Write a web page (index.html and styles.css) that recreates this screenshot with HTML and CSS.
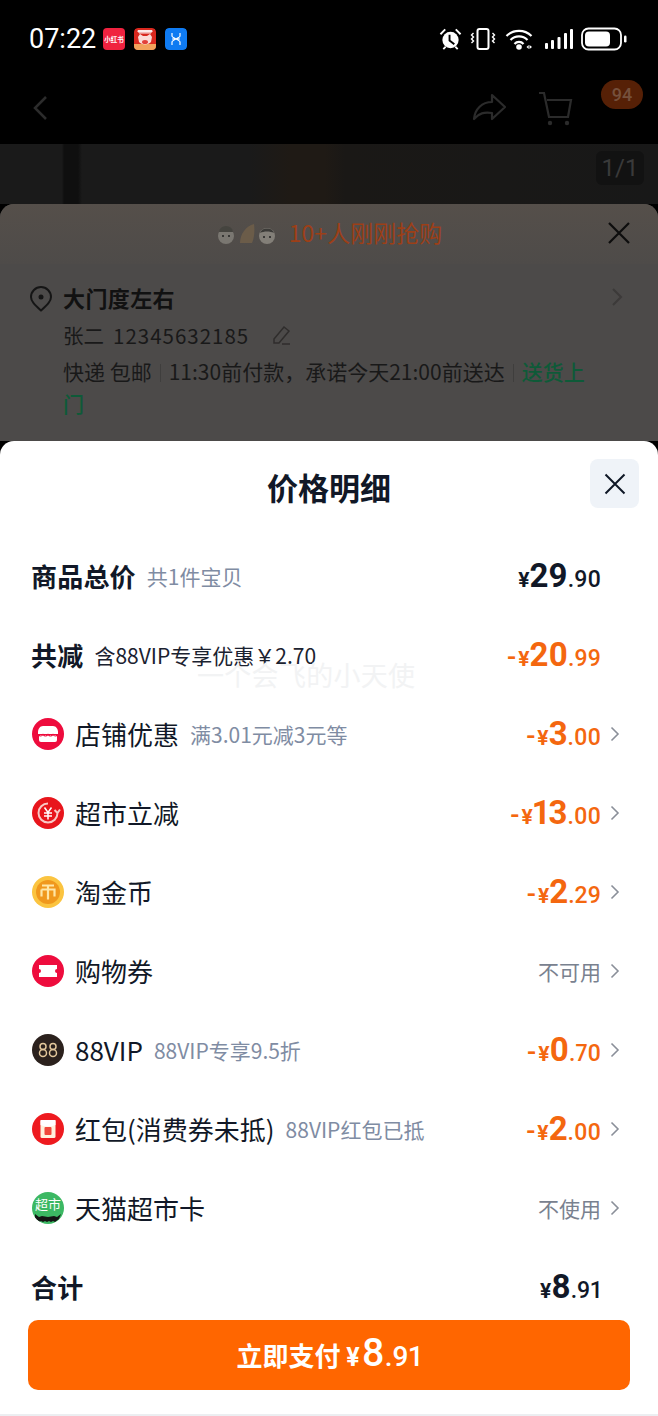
FILE: index.html
```html
<!DOCTYPE html>
<html lang="zh">
<head>
<meta charset="utf-8">
<title>价格明细</title>
<link rel="stylesheet" href="styles.css">
</head>
<body>
<div class="status">
  <span class="time">07:22</span>
  <span class="app app-red">小红书</span>
  <span class="app app-pig"><svg viewBox="0 0 22 22" width="22" height="22"><rect width="22" height="22" rx="4" fill="#d9281f"/><rect y="16" width="22" height="6" fill="#f2a25c"/><path d="M4 9l2-3 3 2h4l3-2 2 3-1 5a7 5 0 0 1-12 0z" fill="#fbdcd8"/><ellipse cx="11" cy="14" rx="3" ry="2" fill="#e2413a"/><path d="M4 2.500h14v1.500H4zM5 5h12" stroke="#fff" stroke-width="1" fill="#fff" opacity=".9"/></svg></span>
  <span class="app app-blue"><svg viewBox="0 0 22 22" width="22" height="22"><rect width="22" height="22" rx="4" fill="#0f7bf2"/><path d="M7 5v3c0 2 8 4 8 6v3M15 5v3c0 2-8 4-8 6v3M7 11h8" stroke="#fff" stroke-width="1.200" fill="none"/></svg></span>
  <span class="status-right">
    <svg class="ic-alarm" viewBox="0 0 24 24" width="23" height="23"><circle cx="12" cy="12.500" r="8.500" fill="#fff"/><path d="M11 7v6l5 4" stroke="#000" stroke-width="2" fill="none"/><path d="M1.500 6.500l5-5M22.500 6.500l-5-5M4.500 22l2.500-2.500M19.500 22L17 19.500" stroke="#fff" stroke-width="2"/></svg>
    <svg class="ic-vib" viewBox="0 0 26 24" width="26" height="24"><rect x="7.500" y="2" width="11" height="20" rx="2" fill="none" stroke="#fff" stroke-width="2"/><path d="M3.500 6L1.500 8l2 2-2 2 2 2-2 2M22.500 6l2 2-2 2 2 2-2 2 2 2" stroke="#fff" stroke-width="1.400" fill="none"/></svg>
    <svg class="ic-wifi" viewBox="0 0 28 22" width="28" height="22"><path d="M1.500 8a18 18 0 0 1 25 0M5.500 12a12 12 0 0 1 17 0M9.500 16a6 6 0 0 1 9 0" stroke="#fff" stroke-width="2.200" fill="none"/><circle cx="14" cy="19" r="2.800" fill="#fff"/><path d="M21.500 19l2.200-2v4zM24.500 17l2.500 2-2.500 2z" fill="#fff"/></svg>
    <svg class="ic-signal" viewBox="0 0 28 22" width="28" height="22"><rect x="0" y="15" width="3" height="6" rx="1" fill="#fff"/><rect x="6" y="12" width="3" height="9" rx="1" fill="#fff"/><rect x="12.500" y="9" width="3" height="12" rx="1" fill="#fff"/><rect x="19" y="5" width="3" height="16" rx="1" fill="#fff"/><rect x="25" y="1" width="3" height="20" rx="1" fill="#fff"/></svg>
    <svg class="ic-batt" viewBox="0 0 46 24" width="46" height="24"><rect x="1" y="1.500" width="39" height="21" rx="6.500" fill="none" stroke="#fff" stroke-width="1.800"/><rect x="4" y="4.500" width="25" height="15" rx="4" fill="#fff"/><rect x="43" y="8.500" width="2.500" height="7" rx="1.200" fill="#fff"/></svg>
  </span>
</div>

<div class="nav">
  <svg class="nav-back" viewBox="0 0 20 28" width="20" height="28"><path d="M16 3L5 14l11 11" stroke="#2c2c2c" stroke-width="2.500" fill="none"/></svg>
  <span class="nav-right">
    <svg viewBox="0 0 36 30" width="36" height="30"><path d="M21 2l13 12-13 12v-6c-8-1-13 0-18 6 1-10 8-17 18-17z" fill="none" stroke="#2b2b2b" stroke-width="2.200" stroke-linejoin="round"/></svg>
    <svg viewBox="0 0 36 36" width="36" height="36"><path d="M2 3h5l5 24h19l3-17H10" fill="none" stroke="#2b2b2b" stroke-width="2.200"/><circle cx="13" cy="33" r="2.200" fill="#2b2b2b"/><circle cx="30" cy="33" r="2.200" fill="#2b2b2b"/></svg>
    <span class="badge">94</span>
  </span>
</div>

<div class="photo"><span class="counter">1/1</span></div>

<section class="under">
  <div class="under-head">
    <svg class="avatars" viewBox="0 0 62 24" width="62" height="24"><circle cx="10" cy="14" r="8" fill="#7a7771"/><path d="M3 10a7 6 0 0 1 14 0z" fill="#45443f"/><circle cx="7" cy="14" r="1" fill="#222"/><circle cx="13" cy="14" r="1" fill="#222"/><path d="M24 21c0-9 6-17 14-19 1 7 0 15-2 19z" fill="#6b5c49"/><circle cx="51" cy="14" r="8" fill="#837f78"/><path d="M44 11a7.500 7 0 0 1 14 0c-4-2-10-2-14 0z" fill="#3c3b38"/><circle cx="48" cy="15" r="1" fill="#222"/><circle cx="54" cy="15" r="1" fill="#222"/></svg>
    <span class="rush">10+人刚刚抢购</span>
    <svg class="under-x" viewBox="0 0 24 24" width="24" height="24"><path d="M2 2l20 20M22 2L2 22" stroke="#0d0d0d" stroke-width="2.200"/></svg>
  </div>
  <div class="addr">
    <svg class="pin" viewBox="0 0 24 26" width="24" height="26"><path d="M12 24.500C6 19 2 15.500 2 11a10 10 0 0 1 20 0c0 4.500-4 8-10 13.500z" fill="none" stroke="#151515" stroke-width="2"/><circle cx="12" cy="11" r="2.500" fill="#151515"/></svg>
    <div class="addr-body">
      <div class="addr-title"><b>大门度左右</b><svg viewBox="0 0 12 20" width="12" height="20"><path d="M2 2l8 8-8 8" stroke="#3c3a39" stroke-width="2" fill="none"/></svg></div>
      <div class="addr-person"><span>张二</span><span class="phone">12345632185</span><svg viewBox="0 0 22 22" width="22" height="22"><path d="M4 15L14 3l5 4L9 19H4zM12 20h8" fill="none" stroke="#2f2d2c" stroke-width="1.500"/></svg></div>
      <p class="addr-ship">快递 包邮<i class="sep"></i>11:30前付款，承诺今天21:00前送达<i class="sep"></i><span class="green">送货上</span><span class="green">门</span></p>
    </div>
  </div>
</section>

<section class="sheet">
  <div class="watermark">一个会飞的小天使</div>
  <header class="sheet-head">
    <h1>价格明细</h1>
    <button class="close" type="button" aria-label="关闭"><svg viewBox="0 0 22 22" width="22" height="22"><path d="M1.500 1.500l19 19M20.500 1.500l-19 19" stroke="#0f1726" stroke-width="2"/></svg></button>
  </header>

  <div class="row">
    <span class="strong">商品总价</span><span class="note">共1件宝贝</span>
    <span class="price dark"><small>¥</small><b>29</b><em>.90</em></span>
  </div>
  <div class="row">
    <span class="strong">共减</span><span class="note note-dark">含88VIP专享优惠￥2.70</span>
    <span class="price"><small class="minus">-</small><small>¥</small><b>20</b><em>.99</em></span>
  </div>
  <div class="row">
    <svg class="ri" viewBox="0 0 32 32"><circle cx="16" cy="16" r="16" fill="#ee0c3d"/><path d="M11 8h10c3 0 5 3 5 6v2H6v-2c0-3 2-6 5-6z" fill="#fff"/><path d="M7 17h18v5a2 2 0 0 1-2 2H9a2 2 0 0 1-2-2z" fill="#fff"/><path d="M6 16.500q3 3 5 0 2.500 3 5 0 2.500 3 5 0 2 3 5 0" fill="none" stroke="#ee0c3d" stroke-width="1.200"/></svg>
    <span class="label">店铺优惠</span><span class="note">满3.01元减3元等</span>
    <span class="price"><small class="minus">-</small><small>¥</small><b>3</b><em>.00</em></span>
    <svg class="chev" viewBox="0 0 10 16"><path d="M1.500 1.500L8 8l-6.500 6.500" fill="none" stroke="#8a8f99" stroke-width="1.600"/></svg>
  </div>
  <div class="row">
    <svg class="ri" viewBox="0 0 32 32"><circle cx="16" cy="16" r="16" fill="#e8151c"/><path d="M16 6.500a9.500 9.500 0 1 0 9.500 9.500M25.500 16l-3-3M25.500 16l2.500-3.500" fill="none" stroke="#f9c9c6" stroke-width="2"/><path d="M12.500 10.500l3.500 5 3.500-5M12 16h8M12 19h8M16 15.500v7" fill="none" stroke="#fff" stroke-width="1.500"/></svg>
    <span class="label">超市立减</span>
    <span class="price"><small class="minus">-</small><small>¥</small><b>13</b><em>.00</em></span>
    <svg class="chev" viewBox="0 0 10 16"><path d="M1.500 1.500L8 8l-6.500 6.500" fill="none" stroke="#8a8f99" stroke-width="1.600"/></svg>
  </div>
  <div class="row">
    <svg class="ri" viewBox="0 0 32 32"><circle cx="16" cy="16" r="16" fill="#fbc440"/><circle cx="16" cy="16" r="12" fill="#f0981d"/><path d="M10 9.500h12M16 9.500v14M9.500 13.500h13v7M9.500 13.500v7" fill="none" stroke="#ffe6a6" stroke-width="2.200"/></svg>
    <span class="label">淘金币</span>
    <span class="price"><small class="minus">-</small><small>¥</small><b>2</b><em>.29</em></span>
    <svg class="chev" viewBox="0 0 10 16"><path d="M1.500 1.500L8 8l-6.500 6.500" fill="none" stroke="#8a8f99" stroke-width="1.600"/></svg>
  </div>
  <div class="row">
    <svg class="ri" viewBox="0 0 32 32"><circle cx="16" cy="16" r="16" fill="#ee0c3d"/><path d="M7 10h18v4a2 2 0 0 0 0 4v4H7v-4a2 2 0 0 0 0-4z" fill="#fff"/></svg>
    <span class="label">购物券</span>
    <span class="state">不可用</span>
    <svg class="chev" viewBox="0 0 10 16"><path d="M1.500 1.500L8 8l-6.500 6.500" fill="none" stroke="#8a8f99" stroke-width="1.600"/></svg>
  </div>
  <div class="row">
    <svg class="ri" viewBox="0 0 32 32"><circle cx="16" cy="16" r="16" fill="#2b211d"/><g fill="none" stroke="#e3c79b" stroke-width="1.500"><circle cx="11" cy="12.500" r="3"/><circle cx="11" cy="19" r="3.500"/><circle cx="21" cy="12.500" r="3"/><circle cx="21" cy="19" r="3.500"/></g></svg>
    <span class="label">88VIP</span><span class="note">88VIP专享9.5折</span>
    <span class="price"><small class="minus">-</small><small>¥</small><b>0</b><em>.70</em></span>
    <svg class="chev" viewBox="0 0 10 16"><path d="M1.500 1.500L8 8l-6.500 6.500" fill="none" stroke="#8a8f99" stroke-width="1.600"/></svg>
  </div>
  <div class="row">
    <svg class="ri" viewBox="0 0 32 32"><circle cx="16" cy="16" r="16" fill="#ee1a1f"/><rect x="8.500" y="7" width="15" height="18" rx="1.500" fill="#fff1dc"/><path d="M8.500 7h15v5q-7.500 3-15 0z" fill="#fff"/><rect x="12.500" y="14" width="7" height="8" rx="1" fill="#f0483a"/></svg>
    <span class="label">红包(消费券未抵)</span><span class="note">88VIP红包已抵</span>
    <span class="price"><small class="minus">-</small><small>¥</small><b>2</b><em>.00</em></span>
    <svg class="chev" viewBox="0 0 10 16"><path d="M1.500 1.500L8 8l-6.500 6.500" fill="none" stroke="#8a8f99" stroke-width="1.600"/></svg>
  </div>
  <div class="row">
    <span class="ri ri-cat"><span class="ri-cat-text">超市</span><svg viewBox="0 0 32 10" width="32" height="10"><path d="M3 1l4 3 3-1 6 1 6-1 3 1 4-3-2 5-4 3-2-1-2 1-2-1-2 1-2-1-2 1-2-1-2 1-4-3z" fill="#141414"/></svg></span>
    <span class="label">天猫超市卡</span>
    <span class="state">不使用</span>
    <svg class="chev" viewBox="0 0 10 16"><path d="M1.500 1.500L8 8l-6.500 6.500" fill="none" stroke="#8a8f99" stroke-width="1.600"/></svg>
  </div>
  <div class="row">
    <span class="strong">合计</span>
    <span class="price dark"><small>¥</small><b>8</b><em>.91</em></span>
  </div>
  <button class="pay" type="button">立即支付 <small>¥</small><b>8</b><em>.91</em></button>
</section>
</body>
</html>
```
FILE: styles.css
```css
* { box-sizing: border-box; }
html, body { margin: 0; padding: 0; }
body {
  width: 658px;
  height: 1416px;
  overflow: hidden;
  background: #000;
  font-family: "Noto Sans CJK SC", "Noto Sans", sans-serif;
  color: #111827;
}
svg { display: block; flex: none; }
.status {
  height: 72px;
  padding: 6px 31px 0 29px;
  display: flex;
  align-items: center;
}
.time {
  font: 400 27px/32px Roboto, sans-serif;
  color: #fff;
  margin-right: 8px;
  width: 66px;
}
.app { width: 22px; height: 22px; margin-right: 9px; border-radius: 4px; overflow: hidden; }
.app-red {
  background: #f0223f;
  color: #fff;
  font-size: 6.500px;
  font-weight: 700;
  line-height: 22px;
  text-align: center;
  white-space: nowrap;
}
.status-right { margin-left: auto; display: flex; align-items: center; }
.ic-vib { margin-left: 8px; }
.ic-wifi { margin-left: 9px; }
.ic-signal { margin-left: 12px; }
.ic-batt { margin-left: 8px; }

.nav {
  height: 72px;
  display: flex;
  align-items: center;
  padding: 0 15px 0 30px;
}
.nav-right { margin-left: auto; display: flex; align-items: center; gap: 30px; position: relative; padding-right: 70px; }
.badge {
  position: absolute;
  right: 0;
  top: -10px;
  width: 42px;
  height: 29px;
  border-radius: 15px;
  background: #562006;
  color: #75503c;
  font: 500 18px/29px Roboto, sans-serif;
  text-align: center;
}

.photo {
  height: 60px;
  background: linear-gradient(90deg, #1a1a1a 0 62px, #0f0f0f 64px 78px, #1a1a1a 82px 250px, #1f1a15 290px 325px, #1a1816 345px, #181818 658px);
  display: flex;
  justify-content: flex-end;
  padding: 7px 14px 0 0;
}
.counter {
  width: 48px;
  height: 34px;
  border-radius: 6px;
  background: #121212;
  color: #3a3a3a;
  font: 400 24px/34px Roboto, sans-serif;
  text-align: center;
}

.under {
  height: 237px;
  background: #4c4a49;
  border-radius: 14px 14px 0 0;
  overflow: hidden;
}
.under-head {
  height: 60px;
  background: linear-gradient(#554f4a, #4e4b49);
  display: flex;
  align-items: center;
  justify-content: center;
  position: relative;
}
.avatars { margin-right: 11px; }
.rush { font-size: 23px; line-height: 30px; color: #9d3f17; margin-top: -4px; }
.under-x { position: absolute; right: 27px; top: 17px; }
.addr { display: flex; gap: 10px; padding: 23px 29px 0 29px; }
.pin { margin-top: -1px; flex: none; }
.addr-body { flex: 1; }
.addr-title { display: flex; justify-content: space-between; align-items: center; height: 28px; margin-top: -4px; padding-right: 6px; font-size: 22px; color: #111; }
.addr-title b { font-weight: 700; letter-spacing: .4px; }
.addr-person { display: flex; align-items: center; height: 28px; margin-top: 10px; font: 400 20.500px/28px "Noto Sans CJK SC", sans-serif; color: #191919; }
.phone { margin-left: 9px; margin-right: 21px; letter-spacing: 1px; }
.addr-ship { margin: 6px 0 0; font-size: 21px; line-height: 32px; color: #191919; width: 530px; }
.sep { display: inline-block; width: 1px; height: 18px; background: #3f3e3d; margin: 0 8px 0 8px; vertical-align: -2px; }
.green { color: #0e5a38; font-weight: 500; }

.sheet {
  position: relative;
  height: 975px;
  background: #fff;
  border-radius: 14px 14px 0 0;
  padding: 0 38px 0 32px;
  border-bottom: 2px solid #eceef1;
}
.sheet-head {
  height: 95px;
  display: flex;
  align-items: center;
  justify-content: center;
  margin: 0 -38px 0 -32px;
  position: relative;
}
.sheet-head h1 { margin: 0 0 3px; font-size: 31px; line-height: 40px; font-weight: 700; color: #111827; }
.close {
  position: absolute;
  right: 19px;
  top: 18px;
  width: 49px;
  height: 49px;
  border: 0;
  border-radius: 8px;
  background: #eff3f8;
  display: flex;
  align-items: center;
  justify-content: center;
  padding: 0;
}
.row {
  height: 79px;
  display: flex;
  align-items: center;
}
.strong { font-size: 26px; font-weight: 700; line-height: 34px; color: #111827; letter-spacing: .2px; margin-left: -1px; }
.label { font-size: 26px; line-height: 34px; color: #111827; margin-left: 11px; }
.ri { width: 32px; height: 32px; flex: none; }
.note { font-size: 21px; line-height: 30px; color: #7f8ca3; margin-left: 11px; }
.note-dark { color: #1b2230; white-space: nowrap; }
.price {
  margin-left: auto;
  margin-right: 19px;
  color: #f4670f;
  font-family: Roboto, sans-serif;
  font-variant-numeric: proportional-nums;
  display: flex;
  align-items: baseline;
  font-weight: 700;
  white-space: nowrap;
}
.price.dark { color: #111827; }
.price small { font-size: 21px; font-weight: 700; }
.price .minus { font-size: 27px; font-weight: 500; margin-right: 2px; }
.price b { font-size: 33px; font-weight: 700; line-height: 40px; }
.price em { font-style: normal; font-size: 23px; font-weight: 500; }
.price + .chev { margin-left: -10px; }
.state { margin-left: auto; font-size: 21px; line-height: 30px; color: #79818f; margin-right: 9px; }
.chev { width: 10px; height: 16px; flex: none; }
.ri-cat {
  border-radius: 50%;
  background: #3cb863;
  overflow: hidden;
  display: flex;
  flex-direction: column;
  align-items: center;
}
.ri-cat-text { font-size: 13px; line-height: 15px; margin-top: 4px; margin-bottom: 2px; color: #fff; white-space: nowrap; }
.pay {
  display: block;
  width: 602px;
  height: 70px;
  margin: -6px 0 0 -4px;
  border: 0;
  border-radius: 10px;
  background: #ff6600;
  color: #fff;
  font-family: "Noto Sans CJK SC", sans-serif;
  font-size: 26px;
  font-weight: 700;
  padding: 0 0 4px;
  font-variant-numeric: proportional-nums;
}
.pay small { font-size: 25px; font-family: Roboto, sans-serif; margin-right: 2px; }
.pay b { font-size: 39px; font-family: Roboto, sans-serif; font-weight: 500; }
.pay em { font-style: normal; font-size: 28px; font-family: Roboto, sans-serif; font-weight: 500; }
.watermark {
  position: absolute;
  left: 197px;
  top: 218px;
  font-size: 27px;
  letter-spacing: .3px;
  line-height: 32px;
  color: #f2f3f4;
  white-space: nowrap;
}
```
